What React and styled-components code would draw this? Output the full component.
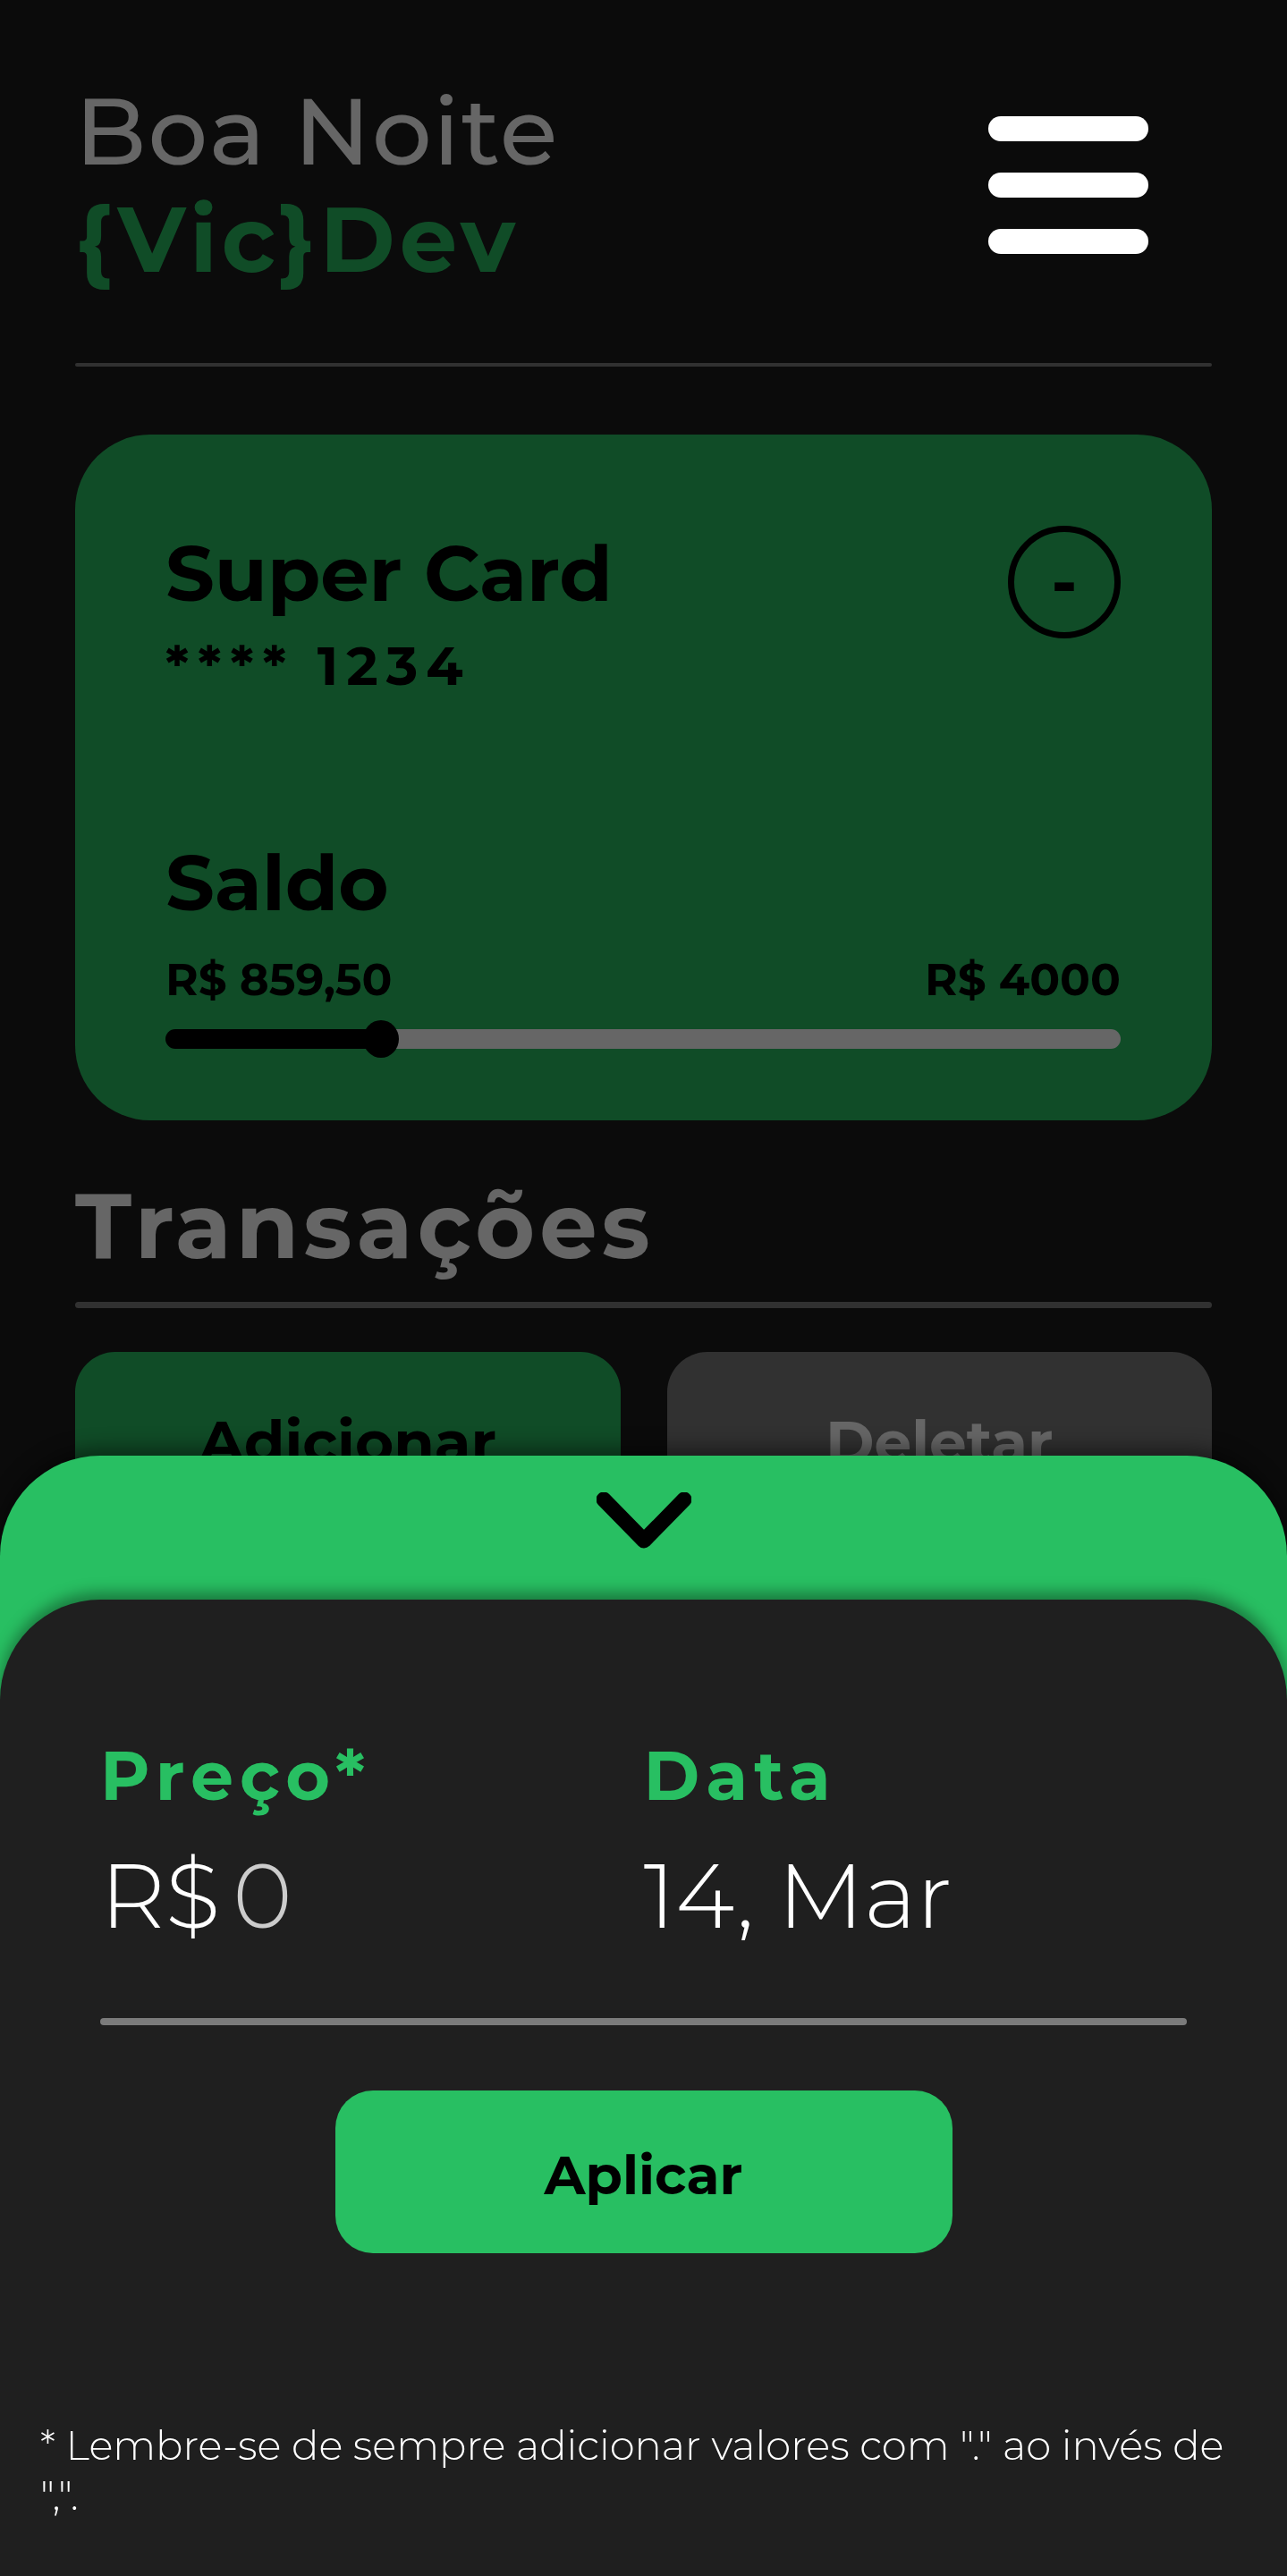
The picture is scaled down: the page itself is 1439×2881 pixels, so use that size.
import React, { useState } from "react";
import styled, { createGlobalStyle } from "styled-components";

const green = "#28bf62";
const grey = "#7b7b7b";

const GlobalStyle = createGlobalStyle`
  *, *::before, *::after { box-sizing: border-box; }
  body { margin: 0; background: #1c1c1c; }
  body, button, input {
    font-family: Montserrat, Inter, "Open Sans", sans-serif;
  }
  h1, h2, h3, p { margin: 0; }
  button { border: 0; padding: 0; cursor: pointer; }
`;

const Page = styled.main`
  min-height: 100vh;
  padding: 0 84px;
  color: #fff;
`;

const Header = styled.header`
  display: flex;
  align-items: center;
  justify-content: space-between;
  padding: 85px 71px 77px 0;
`;

const Greeting = styled.h1`
  font-size: 105px;
  font-weight: 500;
  line-height: 122px;
  letter-spacing: 2px;
`;

const UserName = styled.strong`
  display: block;
  font-size: 102px;
  font-weight: 700;
  letter-spacing: 5px;
  color: ${green};
`;

const MenuButton = styled.button`
  position: relative;
  z-index: 2;
  display: flex;
  flex-direction: column;
  gap: 35px;
  width: 179px;
  background: none;
`;

const MenuBar = styled.span`
  height: 28px;
  border-radius: 14px;
  background: #fff;
`;

const Rule = styled.hr`
  height: ${(p) => p.$size}px;
  margin: 0;
  border: 0;
  border-radius: 4px;
  background: ${grey};
`;

const Card = styled.section`
  margin-top: 76px;
  padding: 102px 102px 70px 101px;
  border-radius: 84px;
  background: ${green};
  color: #000;
`;

const CardTop = styled.div`
  display: flex;
  align-items: flex-start;
  justify-content: space-between;
  margin-bottom: 140px;
`;

const CardTitle = styled.h2`
  font-size: 86px;
  font-weight: 700;
  line-height: 108px;
`;

const CardNumber = styled.p`
  font-size: 60px;
  font-weight: 700;
  line-height: 98px;
  letter-spacing: 9px;
`;

const CollapseButton = styled.button`
  width: 126px;
  height: 126px;
  border: 7px solid #000;
  border-radius: 50%;
  background: none;
  color: #000;
  font-size: 76px;
  font-weight: 700;
  line-height: 112px;
`;

const Amounts = styled.div`
  display: flex;
  justify-content: space-between;
  margin-top: 18px;
  font-size: 50px;
  font-weight: 700;
  line-height: 72px;
`;

const BalanceSlider = styled.input`
  display: block;
  width: 100%;
  height: 42px;
  margin: 9px 0 0;
  appearance: none;
  background: none;

  &::-webkit-slider-runnable-track {
    height: 22px;
    border-radius: 11px;
    background: linear-gradient(to right, #000 ${(p) => p.$filled}%, #fff ${(p) => p.$filled}%);
  }
  &::-webkit-slider-thumb {
    appearance: none;
    width: 40px;
    height: 42px;
    margin-top: -10px;
    border-radius: 50%;
    background: #000;
  }
`;

const SectionTitle = styled.h2`
  margin: 57px 0 24px;
  font-size: 102px;
  font-weight: 700;
  line-height: 122px;
  letter-spacing: 5px;
`;

const Actions = styled.div`
  display: grid;
  grid-template-columns: 1fr 1fr;
  gap: 52px;
  margin-top: 49px;
`;

const ActionButton = styled.button`
  height: 194px;
  padding-top: 6px;
  border-radius: 45px;
  background: ${(p) => (p.$muted ? grey : green)};
  color: ${(p) => (p.$muted ? "#fff" : "#000")};
  font-size: 66px;
  font-weight: 700;
`;

const Backdrop = styled.div`
  position: fixed;
  inset: 0;
  z-index: 1;
  background: rgba(0, 0, 0, 0.6);
`;

const Sheet = styled.section`
  position: fixed;
  right: 0;
  bottom: 0;
  left: 0;
  z-index: 3;
  border-radius: 112px 112px 0 0;
  background: ${green};
  box-shadow: 0 -8px 22px rgba(0, 0, 0, 0.45);
`;

const SheetHandle = styled.button`
  display: flex;
  justify-content: center;
  width: 100%;
  height: 161px;
  padding-top: 41px;
  border-radius: 112px 112px 0 0;
  background: none;
`;

const SheetBody = styled.div`
  padding: 152px 0 62px;
  border-radius: 112px 112px 0 0;
  background: #1f1f1f;
  box-shadow: 0 -8px 16px rgba(0, 0, 0, 0.36);
  color: #fff;
`;

const Form = styled.form`
  display: flex;
  flex-direction: column;
  padding: 0 112px;
`;

const Fields = styled.div`
  display: grid;
  grid-template-columns: repeat(2, minmax(0, 1fr));
  margin-bottom: 76px;
`;

const Field = styled.div`
  display: flex;
  flex-direction: column;
  gap: 28px;
`;

const Label = styled.label`
  font-size: 76px;
  font-weight: 700;
  line-height: 90px;
  letter-spacing: 7px;
  color: ${green};
`;

const Value = styled.div`
  display: flex;
  gap: 14px;
  font-size: 101px;
  font-weight: 300;
  line-height: 122px;
`;

const TextInput = styled.input`
  flex: 1;
  min-width: 0;
  height: 122px;
  padding: 0;
  border: 0;
  outline: 0;
  background: none;
  color: inherit;
  font-size: inherit;
  font-weight: inherit;
  line-height: inherit;

  &::placeholder { color: #ccc; opacity: 1; }
`;

const ApplyButton = styled.button`
  align-self: center;
  width: 690px;
  max-width: 100%;
  height: 182px;
  margin-top: 73px;
  padding-top: 6px;
  border-radius: 42px;
  background: ${green};
  color: #000;
  font-size: 60px;
  font-weight: 700;
`;

const Note = styled.p`
  margin-top: 187px;
  padding: 0 45px;
  font-size: 45px;
  font-weight: 300;
  line-height: 56px;
`;

const balance = 859.5;
const limit = 4000;

export default function App() {
  const [amount, setAmount] = useState(balance);

  return (
    <>
      <GlobalStyle />
      <Page>
        <Header>
          <Greeting>
            Boa Noite
            <UserName>{"{Vic}Dev"}</UserName>
          </Greeting>
          <MenuButton type="button" aria-label="Menu">
            <MenuBar />
            <MenuBar />
            <MenuBar />
          </MenuButton>
        </Header>
        <Rule $size={4} />

        <Card>
          <CardTop>
            <div>
              <CardTitle>Super Card</CardTitle>
              <CardNumber>**** 1234</CardNumber>
            </div>
            <CollapseButton type="button">-</CollapseButton>
          </CardTop>
          <CardTitle as="label" htmlFor="balance">Saldo</CardTitle>
          <Amounts>
            <span>R$ 859,50</span>
            <span>R$ 4000</span>
          </Amounts>
          <BalanceSlider
            id="balance"
            type="range"
            min="0"
            max={limit}
            step="0.5"
            value={amount}
            onChange={(e) => setAmount(Number(e.target.value))}
            $filled={(amount / limit) * 100}
          />
        </Card>

        <SectionTitle>Transações</SectionTitle>
        <Rule $size={7} />
        <Actions>
          <ActionButton type="button">Adicionar</ActionButton>
          <ActionButton type="button" $muted>Deletar</ActionButton>
        </Actions>
      </Page>

      <Backdrop />
      <Sheet>
        <SheetHandle type="button" aria-label="Fechar">
          <svg width="106" height="66" viewBox="0 0 106 66" fill="none" aria-hidden="true">
            <path d="M8 8 L53 54 L98 8" stroke="#000" strokeWidth="17" strokeLinecap="round" strokeLinejoin="round" />
          </svg>
        </SheetHandle>
        <SheetBody>
          <Form onSubmit={(e) => e.preventDefault()}>
            <Fields>
              <Field>
                <Label htmlFor="price">Preço*</Label>
                <Value>
                  <span>R$</span>
                  <TextInput id="price" inputMode="decimal" placeholder="0" />
                </Value>
              </Field>
              <Field>
                <Label htmlFor="date">Data</Label>
                <Value>
                  <TextInput id="date" defaultValue="14, Mar" />
                </Value>
              </Field>
            </Fields>
            <Rule $size={8} />
            <ApplyButton type="submit">Aplicar</ApplyButton>
          </Form>
          <Note>
            * Lembre-se de sempre adicionar valores com "." ao invés de ",".
          </Note>
        </SheetBody>
      </Sheet>
    </>
  );
}
